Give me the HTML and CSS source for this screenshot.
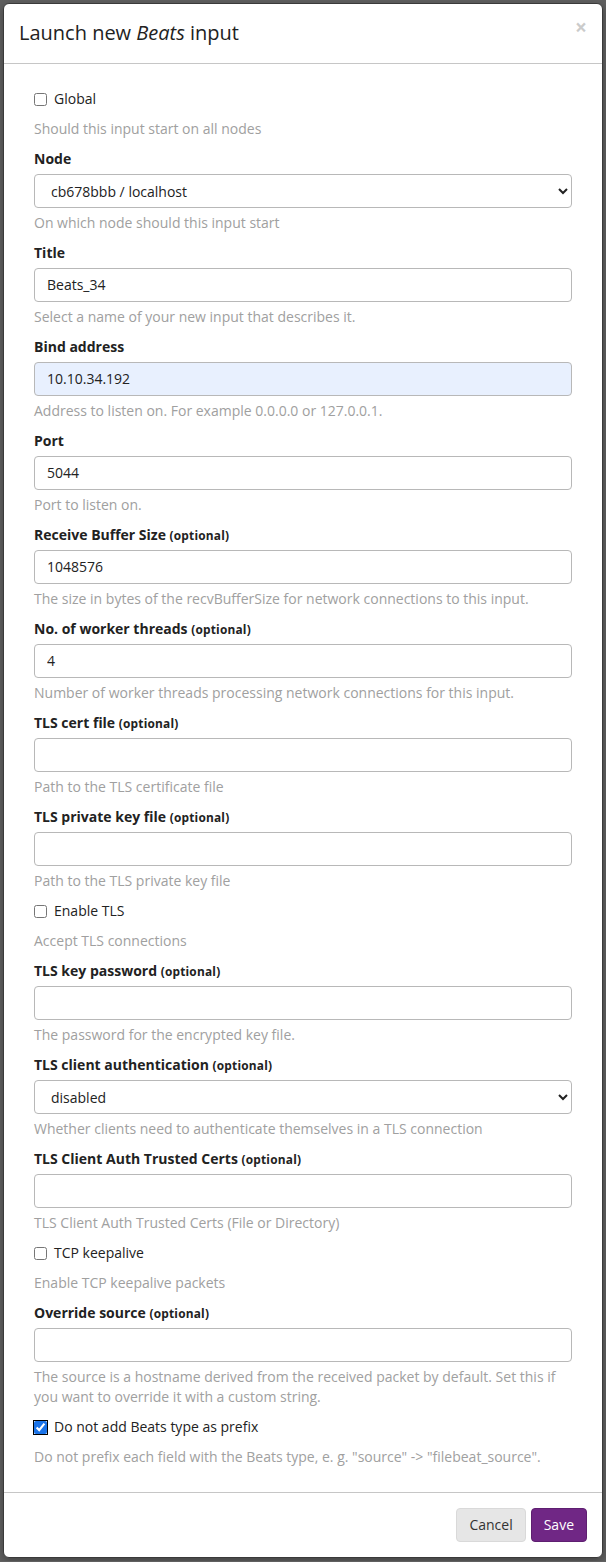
FILE: index.html
```html
<!DOCTYPE html>
<html lang="en">
<head>
<meta charset="utf-8">
<title>Launch new Beats input</title>
<link rel="stylesheet" href="styles.css">
</head>
<body>
<div class="modal">
  <div class="modal-header">
    <h4 class="modal-title">Launch new <em>Beats</em> input</h4>
    <button type="button" class="close" aria-label="Close">×</button>
  </div>
  <form class="modal-body">
    <div class="check-group">
      <label class="checkbox"><input type="checkbox"> Global</label>
      <p class="help help-check">Should this input start on all nodes</p>
    </div>
    <div class="form-group">
      <label class="control-label">Node</label>
      <select class="form-control select"><option>cb678bbb / localhost</option></select>
      <p class="help">On which node should this input start</p>
    </div>
    <div class="form-group">
      <label class="control-label">Title</label>
      <input class="form-control" type="text" value="Beats_34">
      <p class="help">Select a name of your new input that describes it.</p>
    </div>
    <div class="form-group">
      <label class="control-label">Bind address</label>
      <input class="form-control autofill" type="text" value="10.10.34.192">
      <p class="help">Address to listen on. For example 0.0.0.0 or 127.0.0.1.</p>
    </div>
    <div class="form-group">
      <label class="control-label">Port</label>
      <input class="form-control" type="text" value="5044">
      <p class="help">Port to listen on.</p>
    </div>
    <div class="form-group">
      <label class="control-label">Receive Buffer Size <small>(optional)</small></label>
      <input class="form-control" type="text" value="1048576">
      <p class="help">The size in bytes of the recvBufferSize for network connections to this input.</p>
    </div>
    <div class="form-group">
      <label class="control-label">No. of worker threads <small>(optional)</small></label>
      <input class="form-control" type="text" value="4">
      <p class="help">Number of worker threads processing network connections for this input.</p>
    </div>
    <div class="form-group">
      <label class="control-label">TLS cert file <small>(optional)</small></label>
      <input class="form-control" type="text" value="">
      <p class="help">Path to the TLS certificate file</p>
    </div>
    <div class="form-group">
      <label class="control-label">TLS private key file <small>(optional)</small></label>
      <input class="form-control" type="text" value="">
      <p class="help">Path to the TLS private key file</p>
    </div>
    <div class="check-group">
      <label class="checkbox"><input type="checkbox"> Enable TLS</label>
      <p class="help help-check">Accept TLS connections</p>
    </div>
    <div class="form-group">
      <label class="control-label">TLS key password <small>(optional)</small></label>
      <input class="form-control" type="password" value="">
      <p class="help">The password for the encrypted key file.</p>
    </div>
    <div class="form-group">
      <label class="control-label">TLS client authentication <small>(optional)</small></label>
      <select class="form-control select"><option>disabled</option></select>
      <p class="help">Whether clients need to authenticate themselves in a TLS connection</p>
    </div>
    <div class="form-group">
      <label class="control-label">TLS Client Auth Trusted Certs <small>(optional)</small></label>
      <input class="form-control" type="text" value="">
      <p class="help">TLS Client Auth Trusted Certs (File or Directory)</p>
    </div>
    <div class="check-group">
      <label class="checkbox"><input type="checkbox"> TCP keepalive</label>
      <p class="help help-check">Enable TCP keepalive packets</p>
    </div>
    <div class="form-group">
      <label class="control-label">Override source <small>(optional)</small></label>
      <input class="form-control" type="text" value="">
      <p class="help">The source is a hostname derived from the received packet by default. Set this if you want to override it with a custom string.</p>
    </div>
    <div class="check-group last">
      <label class="checkbox"><input type="checkbox" class="checked" checked> Do not add Beats type as prefix</label>
      <p class="help help-check">Do not prefix each field with the Beats type, e. g. "source" -&gt; "filebeat_source".</p>
    </div>
  </form>
  <div class="modal-footer">
    <button type="button" class="btn btn-default">Cancel</button>
    <button type="button" class="btn btn-primary">Save</button>
  </div>
</div>
</body>
</html>
```

FILE: styles.css
```css
* { box-sizing: border-box; }

html, body {
  margin: 0;
  padding: 0;
}

body {
  background: #606060;
  font-family: "Open Sans", "Liberation Sans", sans-serif;
  font-size: 14px;
  line-height: 20px;
  color: #333;
  padding: 3px 3px;
}

.modal {
  width: 600px;
  background: #fff;
  border: 1px solid #3a3a3a;
  border-radius: 6px;
  box-shadow: 0 3px 9px rgba(0, 0, 0, 0.3);
  overflow: hidden;
}

.modal-header {
  display: flex;
  justify-content: space-between;
  align-items: flex-start;
  padding: 15px 15px 15px 15px;
  border-bottom: 1px solid #c6c6c6;
}

.modal-title {
  margin: 0;
  font-size: 20px;
  line-height: 28.5px;
  font-weight: 400;
  color: #222;
}

.modal-title em {
  font-style: italic;
}

.close {
  background: none;
  border: 0;
  padding: 0;
  margin-top: -2px;
  font-family: "Open Sans", "Liberation Sans", sans-serif;
  font-size: 21px;
  line-height: 1;
  font-weight: 700;
  color: #000;
  opacity: 0.2;
}

.modal-body {
  display: block;
  margin: 0;
  padding: 25px 30px 25px 30px;
}

.form-group,
.check-group {
  margin-bottom: 10px;
}

.check-group.last {
  margin-bottom: 0;
}

.control-label {
  display: block;
  height: 20px;
  margin-bottom: 5px;
  font-weight: 700;
  color: #222;
}

.control-label small {
  font-size: 85%;
  line-height: 1;
  font-weight: 700;
  letter-spacing: 0.2px;
}

.checkbox {
  display: flex;
  align-items: flex-start;
  gap: 7px;
  color: #222;
}

.checkbox input {
  width: 13px;
  height: 13px;
  margin: 4px 0 0 0;
}

.checkbox input.checked {
  accent-color: #1a73e8;
  outline: 1px solid #000;
}

.form-control {
  display: block;
  width: 100%;
  height: 34px;
  margin: 0;
  padding: 6px 12px;
  font-family: "Open Sans", "Liberation Sans", sans-serif;
  font-size: 14px;
  line-height: 20px;
  color: #222;
  background: #fff;
  border: 1px solid #b8b8b8;
  border-radius: 4px;
}

.form-control.autofill {
  background: #e8f0fe;
}

.select {
  padding: 6px 10px 6px 12px;
}

.help {
  margin: 5px 0 0 0;
  color: #a0a0a0;
}

.help-check {
  margin-top: 10px;
}

.modal-footer {
  display: flex;
  justify-content: flex-end;
  gap: 5px;
  padding: 15px;
  border-top: 1px solid #c6c6c6;
}

.btn {
  height: 34px;
  padding: 6px 12px;
  font-family: "Open Sans", "Liberation Sans", sans-serif;
  font-size: 14px;
  line-height: 20px;
  border: 1px solid transparent;
  border-radius: 4px;
}

.btn-default {
  background: #e6e6e6;
  border-color: #d9d9d9;
  color: #333;
}

.btn-primary {
  background: #702785;
  border-color: #5e1f70;
  color: #fff;
}
```
